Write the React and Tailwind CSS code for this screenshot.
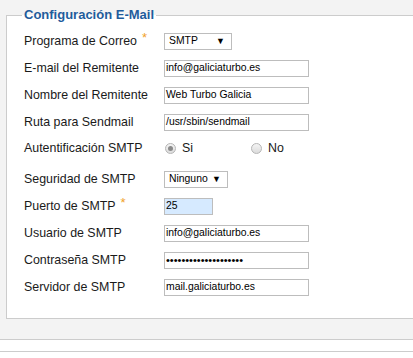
import React from "react";

const font = { fontFamily: '"Liberation Sans", Arial, sans-serif' };

function Label({ children, star }) {
  return (
    <div className="w-[140px] shrink-0 text-[12.4px] text-[#1a1a1a] leading-none flex items-start">
      <span>{children}</span>
      {star && <span className="text-[#f0a12a] text-[13px] leading-none ml-[5px] -mt-[4px]">*</span>}
    </div>
  );
}

function TextBox({ value, w = "w-[145px]", bg = "bg-white" }) {
  return (
    <div className={`${w} h-[17px] ${bg} border border-[#bdbdbd] flex items-center pl-[1px] text-[10.4px] text-black leading-none overflow-hidden whitespace-nowrap`}>
      {value}
    </div>
  );
}

function Select({ value, w }) {
  return (
    <div className={`${w} h-[17px] bg-white border border-[#bdbdbd] flex items-center justify-between pl-[4px] pr-[6px] text-[10.4px] text-black leading-none`}>
      <span>{value}</span>
      <span className="text-[9px] leading-none">▼</span>
    </div>
  );
}

function Radio({ checked }) {
  return (
    <div className="w-[11px] h-[11px] rounded-full border border-[#b5b5b5] bg-gradient-to-b from-[#f4f4f4] to-[#dcdcdc] flex items-center justify-center">
      {checked && <div className="w-[5px] h-[5px] rounded-full bg-[#8a8a8a]" />}
    </div>
  );
}

function Row({ label, star, children, className = "" }) {
  return (
    <div className={`flex items-center h-[17px] ${className}`}>
      <Label star={star}>{label}</Label>
      {children}
    </div>
  );
}

export default function App() {
  return (
    <div className="w-[413px] h-[358px] bg-[#f3f3f3] overflow-hidden" style={font}>
      <fieldset className="ml-[6px] mt-[7px] w-[430px] border border-[#cccccc] bg-white pl-[17px] pb-[22px]">
        <legend className="ml-[-2px] px-[2px] text-[13px] leading-[16px] font-bold text-[#1f5c9c]">
          Configuración E-Mail
        </legend>
        <div className="flex flex-col">
          <Row label="Programa de Correo" star className="mt-[10px]">
            <Select value="SMTP" w="w-[68px]" />
          </Row>
          <Row label="E-mail del Remitente" className="mt-[10px]">
            <TextBox value="info@galiciaturbo.es" />
          </Row>
          <Row label="Nombre del Remitente" className="mt-[10px]">
            <TextBox value="Web Turbo Galicia" />
          </Row>
          <Row label="Ruta para Sendmail" className="mt-[10px]">
            <TextBox value="/usr/sbin/sendmail" />
          </Row>
          <div className="flex items-center h-[14px] mt-[10px]">
            <Label>Autentificación SMTP</Label>
            <div className="flex items-center w-[87px] pl-[1px]">
              <Radio checked />
              <span className="ml-[6px] text-[12.4px] leading-none text-[#1a1a1a]">Si</span>
            </div>
            <div className="flex items-center">
              <Radio />
              <span className="ml-[6px] text-[12.4px] leading-none text-[#1a1a1a]">No</span>
            </div>
          </div>
          <Row label="Seguridad de SMTP" className="mt-[16px]">
            <Select value="Ninguno" w="w-[64px]" />
          </Row>
          <Row label="Puerto de SMTP" star className="mt-[10px]">
            <TextBox value="25" w="w-[49px]" bg="bg-[#d6eaff]" />
          </Row>
          <Row label="Usuario de SMTP" className="mt-[10px]">
            <TextBox value="info@galiciaturbo.es" />
          </Row>
          <Row label="Contraseña SMTP" className="mt-[10px]">
            <TextBox value={<span className="text-[11px]">{"•".repeat(20)}</span>} />
          </Row>
          <Row label="Servidor de SMTP" className="mt-[10px]">
            <TextBox value="mail.galiciaturbo.es" />
          </Row>
        </div>
      </fieldset>
      <div className="mt-[20px] border-t border-[#cccccc] h-[12px] bg-white" />
      <div className="border-t border-[#cccccc] h-[20px] bg-white" />
    </div>
  );
}
